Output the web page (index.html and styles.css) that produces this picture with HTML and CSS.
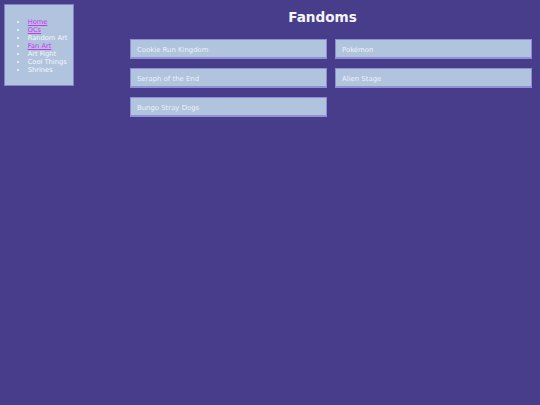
FILE: index.html
```html
<!DOCTYPE html>
<html>
<head>
<meta charset="utf-8">
<title>Fandoms</title>
<link rel="stylesheet" href="styles.css">
</head>
<body>
<div class="page">
  <nav class="sidebar">
    <ul class="menu">
      <li><a href="#">Home</a></li>
      <li><a href="#">OCs</a></li>
      <li>Random Art</li>
      <li><a href="#">Fan Art</a></li>
      <li>Art Fight</li>
      <li>Cool Things</li>
      <li>Shrines</li>
    </ul>
  </nav>
  <main class="main">
    <h1 class="title">Fandoms</h1>
    <div class="grid">
      <div class="card">Cookie Run Kingdom</div>
      <div class="card">Pokémon</div>
      <div class="card">Seraph of the End</div>
      <div class="card">Alien Stage</div>
      <div class="card">Bungo Stray Dogs</div>
    </div>
  </main>
</div>
</body>
</html>
```
FILE: styles.css
```css
html, body {
  margin: 0;
  padding: 0;
  background: #483d8b;
  font-family: "DejaVu Sans", Verdana, sans-serif;
  font-size: 6.7px;
  color: #f2f3fa;
}
.page {
  display: flex;
  align-items: flex-start;
  padding: 4px 8px 0 4px;
}
.sidebar {
  box-sizing: border-box;
  width: 70px;
  flex: none;
  background: #b0c4de;
  border: 1px solid #8282cc;
}
.menu {
  margin: 12.7px 0 11.3px 0;
  padding-left: 22.7px;
  line-height: 8px;
  color: #f7f8fc;
}
.menu a {
  color: #cc33ee;
}
.main {
  flex: 1;
  margin-left: 56px;
}
.title {
  margin: 0;
  padding-right: 17px;
  text-align: center;
  font-size: 13.6px;
  font-weight: bold;
  line-height: 26px;
  color: #f4f4fb;
}
.grid {
  margin-top: 9px;
  display: grid;
  grid-template-columns: 1fr 1fr;
  column-gap: 8px;
  row-gap: 9px;
}
.card {
  box-sizing: border-box;
  height: 20px;
  background: #b0c4de;
  border: 1px solid #8e8cd4;
  border-bottom: 2px solid #9090d4;
  padding: 3px 0 0 6px;
  font-size: 6.9px;
  line-height: 14px;
  color: #eef1f9;
}
```
